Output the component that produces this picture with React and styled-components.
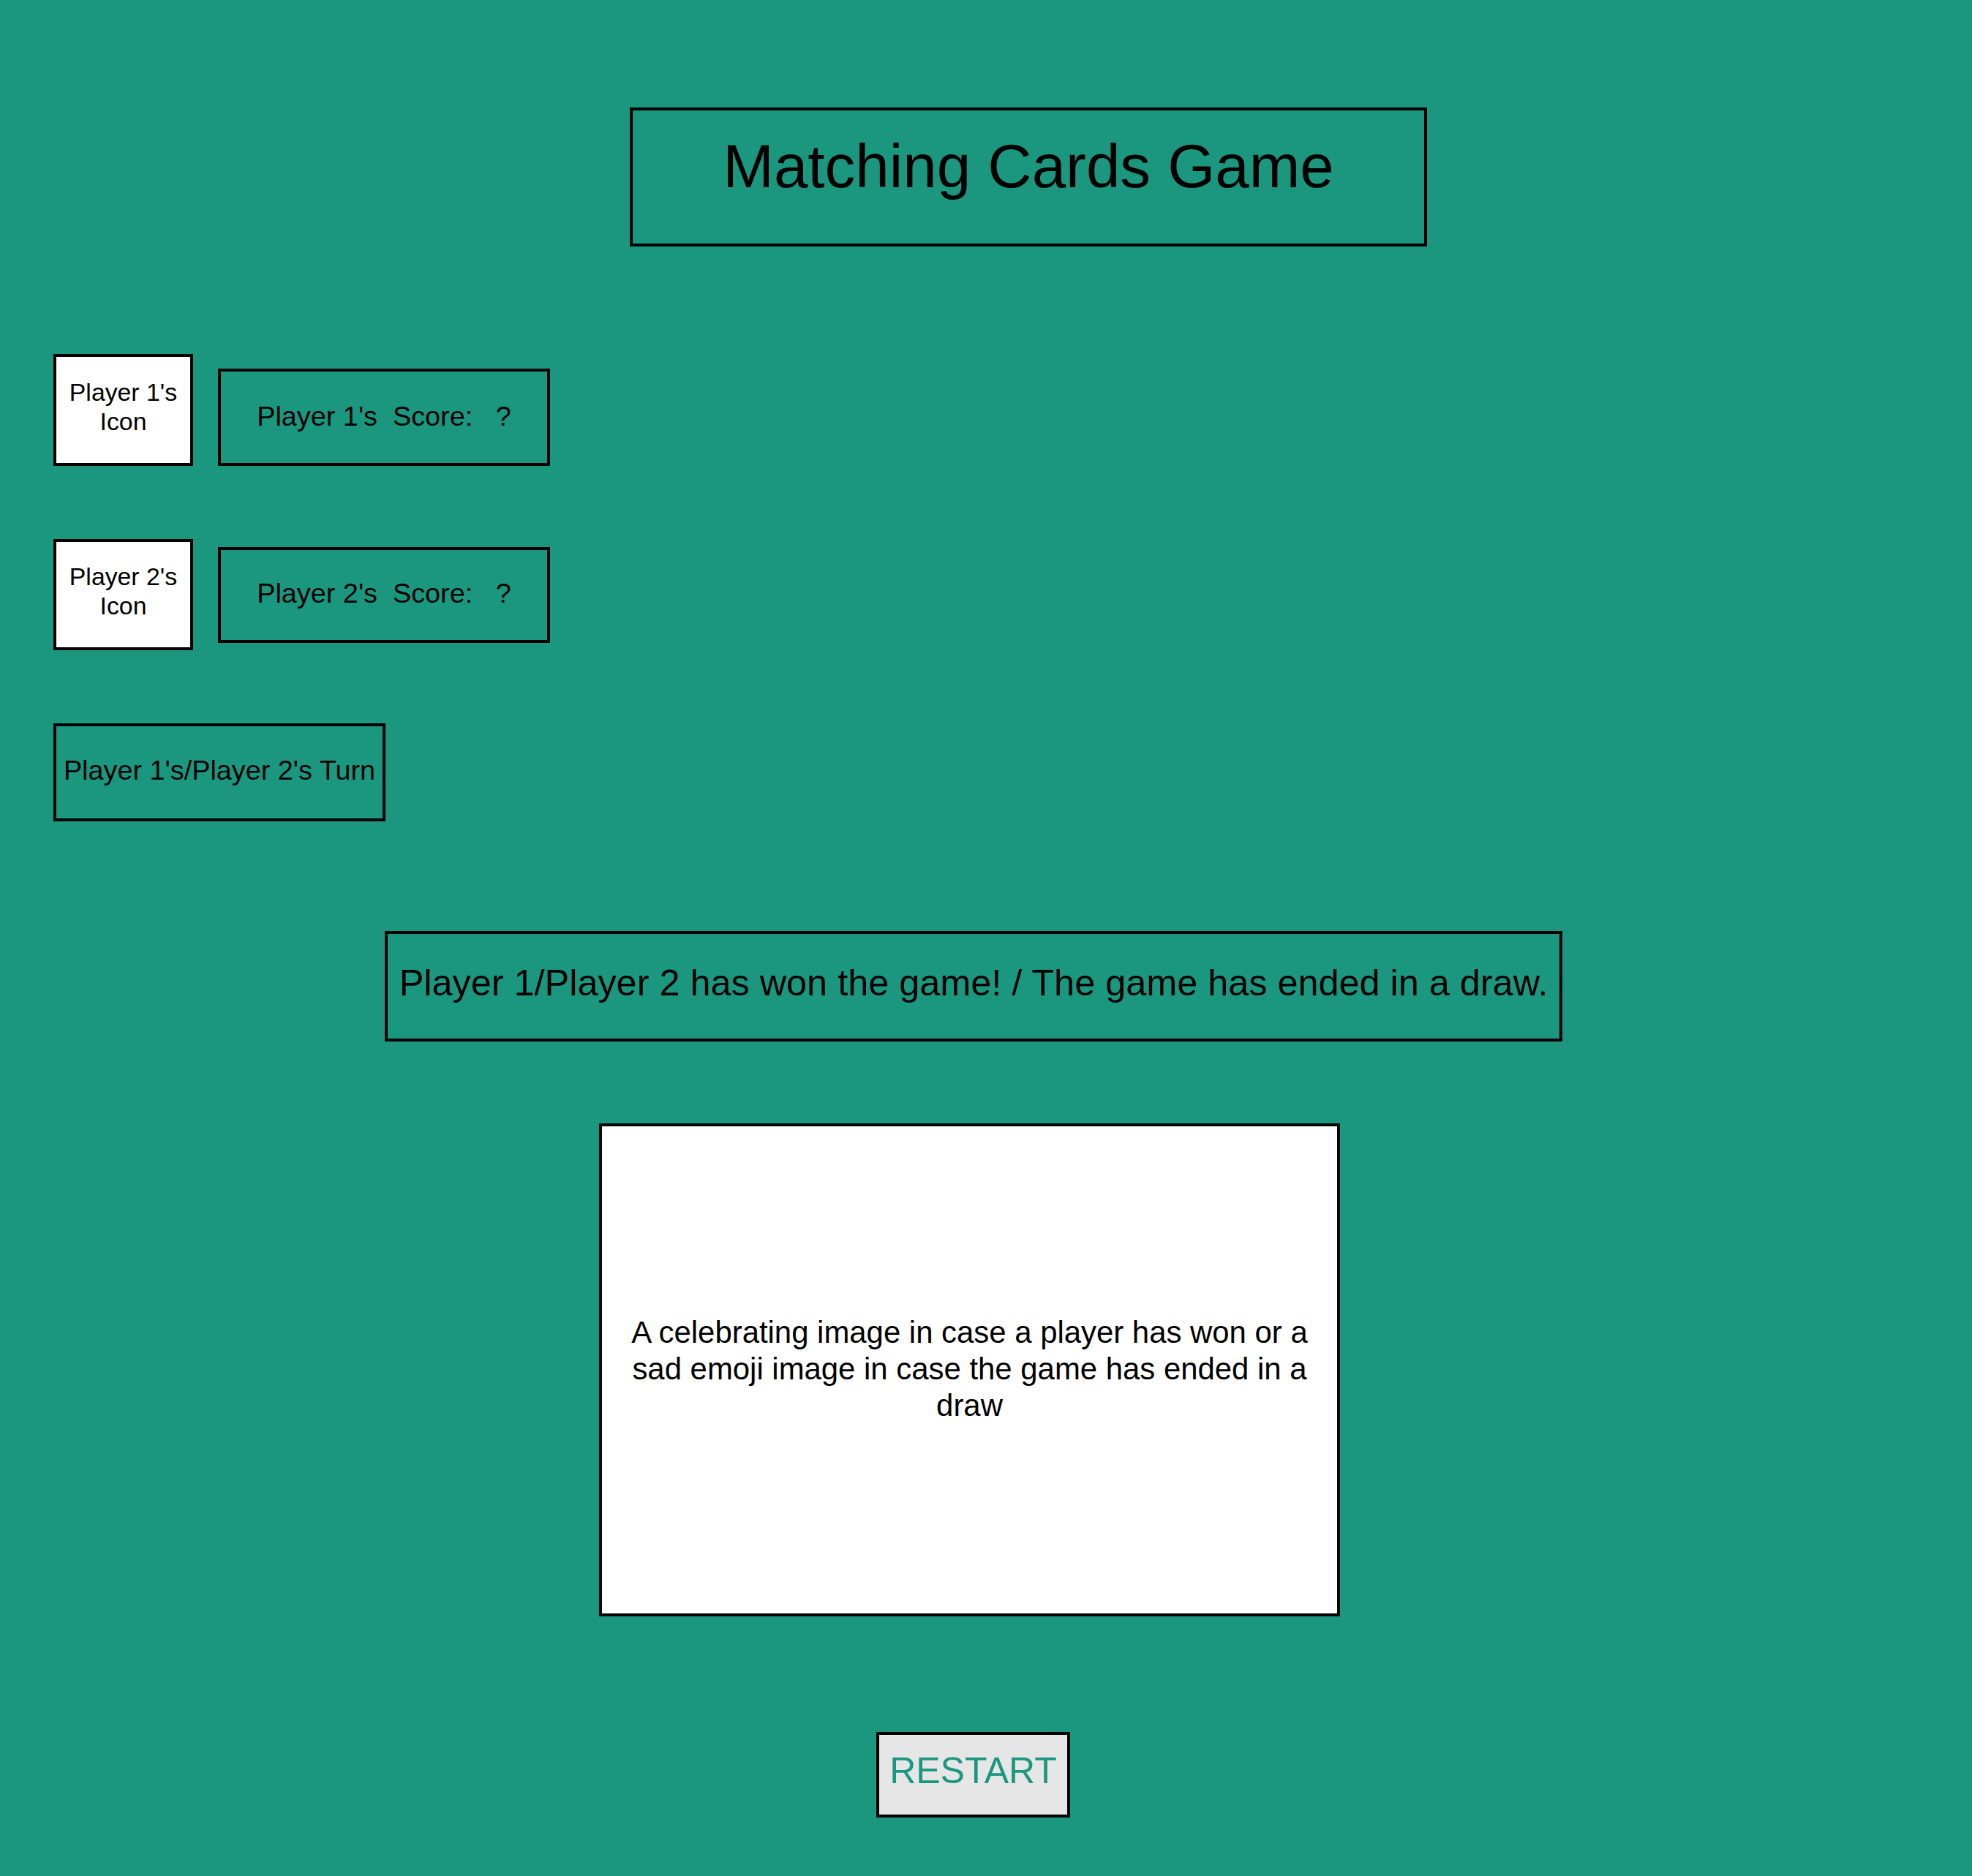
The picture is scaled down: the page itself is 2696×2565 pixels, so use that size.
import React from "react";
import styled, { createGlobalStyle } from "styled-components";

const TEAL = "#1b9780";

const GlobalStyle = createGlobalStyle`
  html, body {
    margin: 0;
    padding: 0;
    background: ${TEAL};
  }
  body {
    font-family: "Liberation Sans", Arial, Helvetica, sans-serif;
    color: #000;
  }
`;

const Page = styled.main`
  box-sizing: border-box;
  width: 2696px;
  min-height: 2565px;
  padding-top: 147px;
  display: flex;
  flex-direction: column;
  align-items: flex-start;
  background: ${TEAL};
`;

const Section = styled.section`
  margin-top: ${(p) => p.$gap || 0}px;
  margin-left: ${(p) => p.$left || 0}px;
`;

const Frame = styled.div`
  box-sizing: border-box;
  display: flex;
  align-items: center;
  justify-content: center;
  text-align: center;
  border: 4px solid #000;
  line-height: 1.2;
  white-space: pre;
`;

const TitleBox = styled(Frame)`
  width: 1090px;
  height: 190px;
  padding-bottom: 30px;
  margin: 0;
  font-size: 83.5px;
  font-weight: 400;
`;

const PlayerRow = styled.div`
  display: flex;
  gap: 34px;
  align-items: ${(p) => p.$align || "center"};
`;

const IconBox = styled(Frame)`
  width: 191px;
  height: ${(p) => p.$h}px;
  background: #fff;
  font-size: 33.8px;
  line-height: 40px;
  padding-bottom: 10px;
`;

const ScoreBox = styled(Frame)`
  width: 454px;
  height: ${(p) => p.$h}px;
  font-size: 37.8px;
  padding-bottom: 2px;
`;

const TurnBox = styled(Frame)`
  width: 454px;
  height: 134px;
  font-size: 37.8px;
  padding-bottom: 5px;
`;

const ResultBox = styled(Frame)`
  width: 1610px;
  height: 151px;
  font-size: 50.4px;
  padding-bottom: 8px;
`;

const ImageBox = styled(Frame)`
  width: 1013px;
  height: 674px;
  background: #fff;
  font-size: 41.9px;
  line-height: 50px;
  white-space: normal;
  padding: 0 30px 3px;
`;

const RestartButton = styled.button`
  box-sizing: border-box;
  width: 265px;
  height: 117px;
  border: 4px solid #000;
  border-radius: 0;
  background: #e6e6e6;
  color: ${TEAL};
  font-family: inherit;
  font-size: 50px;
  line-height: 1.2;
  padding: 0 0 11px;
  display: flex;
  align-items: center;
  justify-content: center;
  cursor: pointer;
`;

const players = [
  { id: 1, gap: 147, align: "flex-end", iconH: 153, scoreH: 133 },
  { id: 2, gap: 100, align: "center", iconH: 152, scoreH: 131 },
];

export default function App() {
  return (
    <>
      <GlobalStyle />
      <Page>
        <Section $left={861}>
          <TitleBox as="h1">Matching Cards Game</TitleBox>
        </Section>

        {players.map((p) => (
          <Section key={p.id} $gap={p.gap} $left={73}>
            <PlayerRow $align={p.align}>
              <IconBox $h={p.iconH}>
                {`Player ${p.id}'s`}
                <br />
                Icon
              </IconBox>
              <ScoreBox $h={p.scoreH}>{`Player ${p.id}'s  Score:   ?`}</ScoreBox>
            </PlayerRow>
          </Section>
        ))}

        <Section $gap={100} $left={73}>
          <TurnBox>Player 1's/Player 2's Turn</TurnBox>
        </Section>

        <Section $gap={150} $left={526}>
          <ResultBox>
            Player 1/Player 2 has won the game! / The game has ended in a draw.
          </ResultBox>
        </Section>

        <Section $gap={112} $left={819}>
          <ImageBox>
            A celebrating image in case a player has won or a sad emoji image in
            case the game has ended in a draw
          </ImageBox>
        </Section>

        <Section $gap={158} $left={1198}>
          <RestartButton type="button">RESTART</RestartButton>
        </Section>
      </Page>
    </>
  );
}
